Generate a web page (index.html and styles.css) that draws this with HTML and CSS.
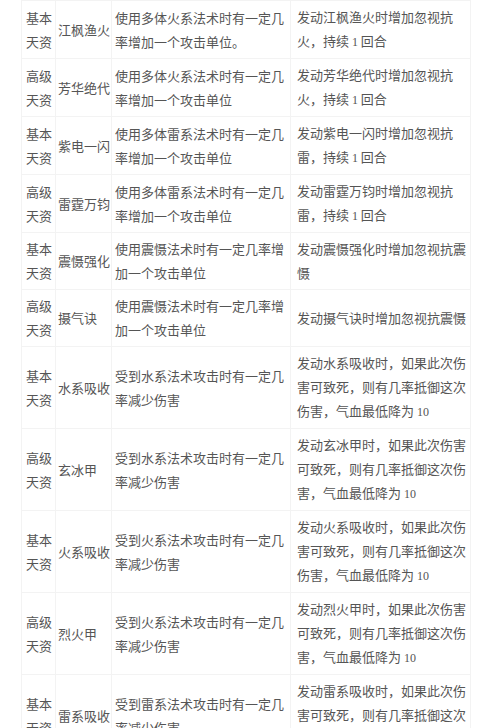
FILE: index.html
```html
<!DOCTYPE html>
<html lang="zh-CN">
<head>
<meta charset="utf-8">
<title>天资</title>
<link rel="stylesheet" href="styles.css">
</head>
<body>
<table class="skills">
  <colgroup>
    <col class="c-type"><col class="c-name"><col class="c-desc"><col class="c-effect">
  </colgroup>
  <tbody>
    <tr><td>基本天资</td><td class="name">江枫渔火</td><td class="desc">使用多体火系法术时有一定几率增加一个攻击单位。</td><td class="eff">发动江枫渔火时增加忽视抗火，持续 <span class="num">1</span> 回合</td></tr>
    <tr><td>高级天资</td><td class="name">芳华绝代</td><td class="desc">使用多体火系法术时有一定几率增加一个攻击单位</td><td class="eff">发动芳华绝代时增加忽视抗火，持续 <span class="num">1</span> 回合</td></tr>
    <tr><td>基本天资</td><td class="name">紫电一闪</td><td class="desc">使用多体雷系法术时有一定几率增加一个攻击单位</td><td class="eff">发动紫电一闪时增加忽视抗雷，持续 <span class="num">1</span> 回合</td></tr>
    <tr><td>高级天资</td><td class="name">雷霆万钧</td><td class="desc">使用多体雷系法术时有一定几率增加一个攻击单位</td><td class="eff">发动雷霆万钧时增加忽视抗雷，持续 <span class="num">1</span> 回合</td></tr>
    <tr><td>基本天资</td><td class="name">震慑强化</td><td class="desc">使用震慑法术时有一定几率增加一个攻击单位</td><td class="eff">发动震慑强化时增加忽视抗震慑</td></tr>
    <tr><td>高级天资</td><td class="name">摄气诀</td><td class="desc">使用震慑法术时有一定几率增加一个攻击单位</td><td class="eff">发动摄气诀时增加忽视抗震慑</td></tr>
    <tr><td>基本天资</td><td class="name">水系吸收</td><td class="desc">受到水系法术攻击时有一定几率减少伤害</td><td class="eff">发动水系吸收时，如果此次伤害可致死，则有几率抵御这次伤害，气血最低降为 <span class="num">10</span></td></tr>
    <tr><td>高级天资</td><td class="name">玄冰甲</td><td class="desc">受到水系法术攻击时有一定几率减少伤害</td><td class="eff">发动玄冰甲时，如果此次伤害可致死，则有几率抵御这次伤害，气血最低降为 <span class="num">10</span></td></tr>
    <tr><td>基本天资</td><td class="name">火系吸收</td><td class="desc">受到火系法术攻击时有一定几率减少伤害</td><td class="eff">发动火系吸收时，如果此次伤害可致死，则有几率抵御这次伤害，气血最低降为 <span class="num">10</span></td></tr>
    <tr><td>高级天资</td><td class="name">烈火甲</td><td class="desc">受到火系法术攻击时有一定几率减少伤害</td><td class="eff">发动烈火甲时，如果此次伤害可致死，则有几率抵御这次伤害，气血最低降为 <span class="num">10</span></td></tr>
    <tr><td>基本天资</td><td class="name">雷系吸收</td><td class="desc">受到雷系法术攻击时有一定几率减少伤害</td><td class="eff">发动雷系吸收时，如果此次伤害可致死，则有几率抵御这次伤害，气血最低降为 <span class="num">10</span></td></tr>
  </tbody>
</table>
</body>
</html>
```
FILE: styles.css
```css
html, body {
  margin: 0;
  padding: 0;
  background: #ffffff;
}
body {
  overflow: hidden;
  font-family: "Noto Sans CJK SC", "Noto Sans", sans-serif;
  font-size: 13px;
  color: #555555;
}
.skills {
  margin: 0 0 0 21px;
  border-collapse: collapse;
  table-layout: fixed;
  width: 449px;
}
.c-type { width: 34px; }
.c-name { width: 56px; }
.c-desc { width: 179px; }
.c-effect { width: 180px; }
.skills td {
  border: 1px solid #f3f3f3;
  padding: 4px 1px 4px 4px;
  line-height: 24px;
  vertical-align: middle;
  word-break: break-all;
}
.skills td.name {
  padding-left: 2px;
  padding-right: 0;
}
.skills td.desc {
  padding-left: 3px;
}
.skills td.eff {
  padding-left: 6px;
}
.num {
  font-family: "Liberation Serif", serif;
  font-size: 12px;
}
```
